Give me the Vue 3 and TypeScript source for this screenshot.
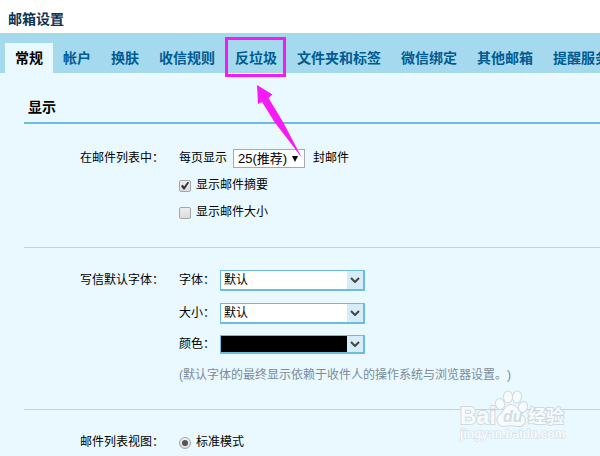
<script setup lang="ts">
import { ref } from 'vue'

interface Tab {
  id: string
  label: string
  marked?: boolean
}

const tabs: Tab[] = [
  { id: 'general', label: '常规' },
  { id: 'account', label: '帐户' },
  { id: 'skin', label: '换肤' },
  { id: 'rules', label: '收信规则' },
  { id: 'spam', label: '反垃圾', marked: true },
  { id: 'folders', label: '文件夹和标签' },
  { id: 'wechat', label: '微信绑定' },
  { id: 'others', label: '其他邮箱' },
  { id: 'remind', label: '提醒服务' },
]

const activeTab = ref('general')
const pageSize = ref('25')
const showSummary = ref(true)
const showSize = ref(false)
const fontFamily = ref('默认')
const fontSize = ref('默认')
const viewMode = ref('standard')
</script>

<template>
  <div class="page" lang="zh-CN">
    <h1 class="title">邮箱设置</h1>
    <nav class="tabs">
      <a
        v-for="tab in tabs"
        :key="tab.id"
        :href="'#' + tab.id"
        class="tab"
        :class="{ active: tab.id === activeTab, marked: tab.marked }"
        @click.prevent="activeTab = tab.id"
      >{{ tab.label }}</a>
    </nav>

    <main class="content">
      <h2 class="heading">显示</h2>

      <section class="group">
        <div class="name">在邮件列表中：</div>
        <div class="fields">
          <div class="row">
            <label for="page-size">每页显示</label>
            <span class="picker">
              <select id="page-size" v-model="pageSize">
                <option value="25">25(推荐)</option>
              </select>
              <svg class="triangle" viewBox="0 0 8 8" aria-hidden="true"><path d="M1 1h6L4 7z" fill="#000" /></svg>
            </span>
            <span>封邮件</span>
          </div>
          <label class="row choice"><input v-model="showSummary" type="checkbox">显示邮件摘要</label>
          <label class="row choice"><input v-model="showSize" type="checkbox">显示邮件大小</label>
        </div>
      </section>

      <section class="group fonts">
        <div class="name">写信默认字体：</div>
        <div class="fields">
          <div class="row font-row">
            <label for="font-family">字体：</label>
            <span class="combo">
              <select id="font-family" v-model="fontFamily"><option>默认</option></select>
              <span class="drop"><svg viewBox="0 0 10 6" aria-hidden="true"><path d="M1 1l4 4 4-4" /></svg></span>
            </span>
          </div>
          <div class="row font-row">
            <label for="font-size">大小：</label>
            <span class="combo">
              <select id="font-size" v-model="fontSize"><option>默认</option></select>
              <span class="drop"><svg viewBox="0 0 10 6" aria-hidden="true"><path d="M1 1l4 4 4-4" /></svg></span>
            </span>
          </div>
          <div class="row color-row">
            <label for="font-color">颜色：</label>
            <span class="combo swatch">
              <button id="font-color" type="button"></button>
              <span class="drop"><svg viewBox="0 0 10 6" aria-hidden="true"><path d="M1 1l4 4 4-4" /></svg></span>
            </span>
          </div>
          <p class="note">(默认字体的最终显示依赖于收件人的操作系统与浏览器设置。)</p>
        </div>
      </section>

      <section class="group view">
        <div class="name">邮件列表视图：</div>
        <div class="fields">
          <label class="row choice"><input v-model="viewMode" type="radio" name="view" value="standard">标准模式</label>
        </div>
      </section>
    </main>

    <svg class="arrow" viewBox="0 0 46 74" aria-hidden="true">
      <path d="M0 0L15.5 9.5L11.5 13L26 37L45 73L17.5 37L5 17L1 19Z" fill="#f61af6" />
    </svg>

    <svg class="watermark" viewBox="0 0 112 60" aria-hidden="true">
      <g class="mark">
        <text x="2" y="40" font-size="23">Bai</text>
        <ellipse cx="42" cy="20" rx="4" ry="5" transform="rotate(-15 42 20)" />
        <ellipse cx="50" cy="13" rx="4" ry="5.5" />
        <ellipse cx="59" cy="13" rx="4" ry="5.5" transform="rotate(8 59 13)" />
        <ellipse cx="65" cy="23" rx="4" ry="5" transform="rotate(20 65 23)" />
        <path d="M53 21C47 21 46 28 42 31C37 35 40 42 46 42C51 41 56 41 60 42C67 43 69 35 64 31C60 27 59 21 53 21Z" />
        <text x="45" y="38" class="du" font-size="16">du</text>
        <text x="70" y="39" font-size="18">经验</text>
        <text x="2" y="54" class="site" font-size="12">jingyan.baidu.com</text>
      </g>
    </svg>
  </div>
</template>

<style>
html,
body {
  background: #eaf8ff;
}
</style>

<style scoped>
.page {
  position: relative;
  overflow: hidden;
  font: 12px/20px "Liberation Sans", "Noto Sans CJK SC", sans-serif;
  text-spacing-trim: space-all;
  color: #000;
}
.title {
  margin: 0;
  padding: 9px 8px 4px;
  background: #fff;
  color: #0b3453;
  font-size: 14px;
  line-height: 20px;
}
.tabs {
  display: flex;
  padding: 10px 5px 0;
  background: #a5d9ee;
}
.tab {
  position: relative;
  flex: none;
  padding: 0 10px;
  color: #005b93;
  font-size: 14px;
  font-weight: bold;
  line-height: 30px;
  text-decoration: none;
}
.tab.active {
  background: #eaf8ff;
  color: #000;
}
.tab.marked::after {
  content: "";
  position: absolute;
  inset: -6px 1px -4px 0;
  border: 3px solid #f61af6;
}
.content {
  padding: 24px 0 0 24px;
}
.heading {
  margin: 0;
  padding: 0 4px 5px;
  border-bottom: 2px solid #6cbbe0;
  font-size: 14px;
  line-height: 20px;
}
.group {
  display: grid;
  grid-template-columns: 99px 1fr;
  padding: 21px 0 21px 56px;
  line-height: 27px;
}
.group + .group {
  border-top: 1px solid #b0d9eb;
}
.fields {
  display: flex;
  flex-direction: column;
}
.row {
  display: flex;
  align-items: center;
  min-height: 27px;
}
.picker,
.combo {
  display: grid;
  align-items: center;
}
.picker {
  margin: 0 8px 0 6px;
}
select {
  appearance: none;
  grid-area: 1 / 1;
  margin: 0;
  border: 0;
  border-radius: 0;
  background: #fff;
  color: #000;
  font: inherit;
}
.picker select {
  width: 72px;
  height: 19px;
  padding: 0 4px;
  border: 1px solid #a9a9a9;
  font-size: 13px;
  line-height: 17px;
}
.triangle {
  grid-area: 1 / 1;
  justify-self: end;
  width: 8px;
  height: 8px;
  margin-right: 6px;
  pointer-events: none;
}
.choice {
  gap: 5px;
}
.choice input {
  appearance: none;
  display: grid;
  place-items: center;
  width: 12px;
  height: 12px;
  margin: 0;
  border: 1px solid #a3a7a9;
  border-radius: 2px;
  background: linear-gradient(#eeeeee, #dcdcdc);
}
.choice input[type="radio"] {
  border-radius: 50%;
}
.choice input[type="radio"]:checked::after {
  content: "";
  width: 6px;
  height: 6px;
  border-radius: 50%;
  background: #555;
}
.choice input[type="checkbox"]:checked::after {
  content: "";
  width: 8px;
  height: 8px;
  background: #333;
  clip-path: polygon(0 55%, 20% 40%, 40% 62%, 85% 0, 100% 15%, 45% 100%, 30% 100%);
}
.fonts {
  padding: 16px 0 18px 56px;
  line-height: 33px;
}
.color-row {
  line-height: 29px;
}
.font-row label,
.color-row label {
  width: 41px;
}
.combo {
  width: 145px;
  height: 21px;
  box-sizing: border-box;
  grid-template-columns: 1fr 16px;
  align-items: stretch;
  border: solid #6cbbe0;
  border-width: 1px 2px 2px 1px;
}
.combo select {
  padding: 0 3px;
  line-height: 18px;
}
.combo.swatch {
  height: 19px;
}
.swatch button {
  padding: 0;
  border: 0;
  background: #000;
}
.drop {
  display: grid;
  place-items: center;
  background: #d6edf9;
}
.drop svg {
  width: 10px;
  height: 6px;
  fill: none;
  stroke: #444;
  stroke-width: 2;
}
.note {
  margin: 0;
  color: #7b8c98;
  line-height: 32px;
}
.view {
  padding: 19px 0 0 56px;
}
.arrow {
  position: absolute;
  left: 257px;
  top: 85px;
  width: 46px;
  height: 74px;
  pointer-events: none;
}
.watermark {
  position: absolute;
  left: 458px;
  top: 384px;
  width: 112px;
  height: 60px;
  pointer-events: none;
}
.mark {
  fill: #f6fbfe;
  stroke: #d0dadf;
  stroke-width: 2;
  paint-order: stroke;
  font-family: "Liberation Sans", "Noto Sans CJK SC", sans-serif;
  font-weight: bold;
}
.du {
  fill: #d3dde3;
  stroke: none;
  font-style: italic;
}
.site {
  stroke-width: 1;
}
</style>
